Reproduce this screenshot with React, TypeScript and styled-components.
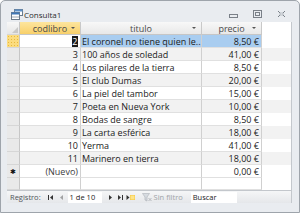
import styled, { createGlobalStyle } from 'styled-components';

const GlobalStyle = createGlobalStyle`
  html, body {
    margin: 0;
    padding: 0;
    background: #ffffff;
  }
  body {
    font-family: "Open Sans", "Noto Sans", sans-serif;
  }
`;

const books = [
  { id: 2, title: 'El coronel no tiene quien le..', price: '8,50 €' },
  { id: 3, title: '100 años de soledad', price: '41,00 €' },
  { id: 4, title: 'Los pilares de la tierra', price: '8,50 €' },
  { id: 5, title: 'El club Dumas', price: '20,00 €' },
  { id: 6, title: 'La piel del tambor', price: '15,00 €' },
  { id: 7, title: 'Poeta en Nueva York', price: '10,00 €' },
  { id: 8, title: 'Bodas de sangre', price: '8,50 €' },
  { id: 9, title: 'La carta esférica', price: '18,00 €' },
  { id: 10, title: 'Yerma', price: '41,00 €' },
  { id: 11, title: 'Marinero en tierra', price: '18,00 €' },
];

const Window = styled.div`
  width: 298px;
  height: 211px;
  border: 1px solid #9ea4ab;
  border-radius: 5px 5px 0 0;
  background: #e9ecf0;
  display: flex;
  flex-direction: column;
  overflow: hidden;
`;

const TitleBar = styled.div`
  height: 21px;
  display: flex;
  align-items: center;
  padding: 0 13px 0 10px;
  gap: 1px;
`;

const Title = styled.span`
  font-size: 8px;
  color: #2d2d2d;
  flex: 1;
  margin-top: 5px;
`;

const Controls = styled.div`
  display: flex;
  gap: 15px;
  margin-top: 5px;
`;

const Body = styled.div`
  flex: 1;
  padding: 0 7px 9px 6px;
  display: flex;
`;

const Sheet = styled.div`
  flex: 1;
  background: #ffffff;
  display: flex;
  flex-direction: column;
  border-right: 1px solid #c4c8cd;
`;

const Row = styled.div<{ $h?: number; $alt?: boolean }>`
  display: flex;
  height: ${(p) => p.$h ?? 13}px;
  background: ${(p) => (p.$alt ? '#f2f2f2' : '#ffffff')};
`;

const Selector = styled.div<{ $active?: boolean; $head?: boolean }>`
  width: 13px;
  flex: none;
  box-sizing: border-box;
  border-right: 1px solid #c6c6c6;
  border-bottom: 1px solid #d6d6d6;
  background: ${(p) =>
    p.$active
      ? 'radial-gradient(#e7b93e 0.6px, transparent 0.8px) 0 0 / 3px 3px, #fbdc80'
      : p.$head
      ? 'linear-gradient(#f7f7f7, #e6e6e6)'
      : '#e9e9e9'};
  display: flex;
  align-items: center;
  justify-content: center;
  position: relative;
`;

const HeadCell = styled.div<{ $w: number; $active?: boolean }>`
  width: ${(p) => p.$w}px;
  flex: none;
  box-sizing: border-box;
  border-right: 1px solid #c9c9c9;
  border-bottom: 1px solid #c6c6c6;
  background: ${(p) =>
    p.$active ? 'linear-gradient(#fde59e, #f8d06a)' : 'linear-gradient(#f8f8f8, #e8e8e8)'};
  font-size: 9px;
  color: #4a4a4a;
  display: flex;
  align-items: center;
  justify-content: center;
  position: relative;
`;

const Arrow = styled.span`
  position: absolute;
  right: 5px;
  top: 5px;
  width: 0;
  height: 0;
  border-left: 2px solid transparent;
  border-right: 2px solid transparent;
  border-top: 2px solid #555;
`;

const Cell = styled.div<{ $w: number; $right?: boolean; $sel?: boolean; $muted?: boolean }>`
  width: ${(p) => p.$w}px;
  flex: none;
  box-sizing: border-box;
  border-right: 1px solid #d0d0d0;
  border-bottom: 1px solid #e0e0e0;
  background: ${(p) => (p.$sel ? '#a9cdf0' : 'transparent')};
  font-size: 9px;
  color: ${(p) => (p.$muted ? '#3c3c3c' : '#1b1b1b')};
  display: flex;
  align-items: center;
  justify-content: ${(p) => (p.$right ? 'flex-end' : 'flex-start')};
  padding: 0 2px 0 1px;
  white-space: nowrap;
  overflow: hidden;
  line-height: 1;
`;

const Filler = styled.div`
  flex: 1;
`;

const Caret = styled.span`
  background: #1a1a1a;
  color: #ffffff;
  padding: 1px 0.5px;
`;

const NavBar = styled.div`
  height: 13px;
  flex: none;
  box-sizing: border-box;
  border-top: 1px solid #c3c7cc;
  background: linear-gradient(#f5f6f7, #e5e7ea);
  display: flex;
  align-items: center;
  padding-left: 3px;
  font-size: 7.5px;
  color: #50555a;
`;

const NavLabel = styled.span`
  margin-right: 6px;
`;

const NavButton = styled.span<{ $dim?: boolean }>`
  display: flex;
  align-items: center;
  width: 10px;
  justify-content: center;
  opacity: ${(p) => (p.$dim ? 0.4 : 1)};
`;

const Field = styled.div<{ $w: number }>`
  width: ${(p) => p.$w}px;
  height: 11px;
  background: #ffffff;
  display: flex;
  align-items: center;
  padding-left: 2px;
  box-sizing: border-box;
  color: #222;
  margin: 0 4px 0 1px;
`;

const FilterLabel = styled.span`
  color: #a0a4a8;
  margin: 0 7px 0 2px;
`;

const HEAD = [
  { label: 'codlibro', w: 61, active: true },
  { label: 'titulo', w: 121 },
  { label: 'precio', w: 60 },
];

const QueryIcon = () => (
  <svg width="12" height="11" viewBox="0 0 12 11" style={{ marginTop: 5 }}>
    <rect x="3.5" y="0.5" width="8" height="6" fill="#ffffff" stroke="#6b7b8c" />
    <rect x="3.5" y="0.5" width="8" height="2" fill="#5b8fc7" />
    <rect x="0.5" y="3.5" width="8" height="7" fill="#ffffff" stroke="#6b7b8c" />
    <rect x="0.5" y="3.5" width="8" height="2" fill="#3f78b8" />
    <line x1="1" y1="8" x2="8" y2="8" stroke="#9aa7b4" />
  </svg>
);

const Minimize = () => (
  <svg width="9" height="8" viewBox="0 0 9 8">
    <rect x="0.5" y="4.5" width="8" height="3" fill="none" stroke="#7a8088" />
  </svg>
);

const Restore = () => (
  <svg width="9" height="8" viewBox="0 0 9 8">
    <rect x="0.5" y="0.5" width="8" height="7" fill="none" stroke="#7a8088" />
    <rect x="2.5" y="2.5" width="4" height="3" fill="none" stroke="#7a8088" />
  </svg>
);

const Close = () => (
  <svg width="9" height="8" viewBox="0 0 9 8">
    <path d="M1 1 L3 3 M8 1 L6 3 M1 7 L3 5 M8 7 L6 5" stroke="#7a8088" strokeWidth="1" />
    <rect x="3" y="3" width="3" height="2" fill="none" stroke="#9aa0a8" strokeWidth="0.6" />
  </svg>
);

const NavIcon = ({ kind }: { kind: 'first' | 'prev' | 'next' | 'last' | 'new' }) => (
  <svg width="9" height="7" viewBox="0 0 9 7">
    {kind === 'first' && (
      <>
        <rect x="1" y="1" width="1" height="5" fill="#333" />
        <path d="M6 1 L3 3.5 L6 6 Z" fill="#333" />
      </>
    )}
    {kind === 'prev' && <path d="M6 1 L3 3.5 L6 6 Z" fill="#333" />}
    {kind === 'next' && <path d="M3 1 L6 3.5 L3 6 Z" fill="#333" />}
    {kind === 'last' && (
      <>
        <path d="M2 1 L5 3.5 L2 6 Z" fill="#333" />
        <rect x="6" y="1" width="1" height="5" fill="#333" />
      </>
    )}
    {kind === 'new' && (
      <>
        <path d="M0.5 1 L3.5 3.5 L0.5 6 Z" fill="#333" />
        <rect x="4" y="1" width="5" height="5" fill="#f6c940" />
        <rect x="4.5" y="1.5" width="4" height="4" fill="#fde48a" />
      </>
    )}
  </svg>
);

const FilterIcon = () => (
  <svg width="10" height="9" viewBox="0 0 10 9" style={{ opacity: 0.45 }}>
    <path d="M0.5 0.5 L7.5 0.5 L5 4 L5 8 L3 7 L3 4 Z" fill="#b8c2cc" stroke="#6b747e" strokeWidth="0.7" />
    <path d="M6.5 5 L9.5 8 M9.5 5 L6.5 8" stroke="#6b747e" strokeWidth="0.9" />
  </svg>
);

const Corner = () => (
  <svg width="6" height="6" viewBox="0 0 6 6" style={{ position: 'absolute', right: 1, bottom: 1 }}>
    <path d="M6 0 L6 6 L0 6 Z" fill="#c9c9c9" />
  </svg>
);

export default function App() {
  return (
    <>
      <GlobalStyle />
      <Window>
        <TitleBar>
          <QueryIcon />
          <Title>Consulta1</Title>
          <Controls>
            <Minimize />
            <Restore />
            <Close />
          </Controls>
        </TitleBar>
        <Body>
          <Sheet>
            <Row>
              <Selector $head>
                <Corner />
              </Selector>
              {HEAD.map((h) => (
                <HeadCell key={h.label} $w={h.w} $active={h.active}>
                  {h.label}
                  <Arrow />
                </HeadCell>
              ))}
              <Filler />
            </Row>
            {books.map((b, i) => {
              const sel = i === 0;
              return (
                <Row key={b.id} $alt={i % 2 === 1}>
                  <Selector $active={sel} />
                  <Cell $w={61} $right style={sel ? { background: '#ffffff' } : undefined}>
                    {sel ? <Caret>{b.id}</Caret> : b.id}
                  </Cell>
                  <Cell $w={121} $sel={sel}>
                    {b.title}
                  </Cell>
                  <Cell $w={60} $right $sel={sel}>
                    {b.price}
                  </Cell>
                  <Filler />
                </Row>
              );
            })}
            <Row>
              <Selector>
                <span style={{ fontSize: 7, color: '#111', lineHeight: 1 }}>✱</span>
              </Selector>
              <Cell $w={61} $right $muted>
                (Nuevo)
              </Cell>
              <Cell $w={121} />
              <Cell $w={60} $right>
                0,00 €
              </Cell>
              <Filler />
            </Row>
            <Row $h={12}>
              <Selector />
              <Cell $w={61} />
              <Cell $w={121} />
              <Cell $w={60} />
              <Filler />
            </Row>
            <NavBar>
              <NavLabel>Registro:</NavLabel>
              <NavButton>
                <NavIcon kind="first" />
              </NavButton>
              <NavButton $dim>
                <NavIcon kind="prev" />
              </NavButton>
              <Field $w={34}>1 de 10</Field>
              <NavButton>
                <NavIcon kind="next" />
              </NavButton>
              <NavButton>
                <NavIcon kind="last" />
              </NavButton>
              <NavButton>
                <NavIcon kind="new" />
              </NavButton>
              <NavButton style={{ marginLeft: 6 }}>
                <FilterIcon />
              </NavButton>
              <FilterLabel>Sin filtro</FilterLabel>
              <Field $w={46}>Buscar</Field>
            </NavBar>
          </Sheet>
        </Body>
      </Window>
    </>
  );
}
